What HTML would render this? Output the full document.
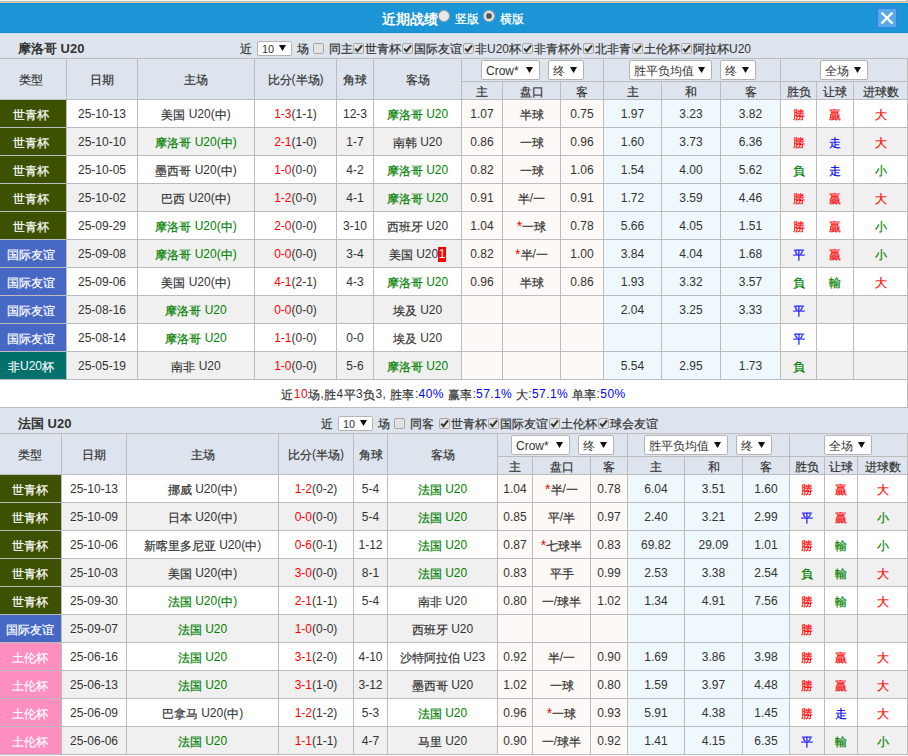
<!DOCTYPE html><html><head><meta charset="utf-8"><style>
*{margin:0;padding:0;box-sizing:border-box}
html,body{width:908px;height:756px;overflow:hidden;background:#fff}
body{position:relative;font-family:"Liberation Sans",sans-serif;font-size:12px;color:#333}
.r{position:absolute}
.t{position:absolute;display:flex;align-items:center;justify-content:center;white-space:nowrap;color:#333;line-height:14px}
.title{position:absolute;font-weight:bold;font-size:13px;color:#333;white-space:nowrap}
.hd{position:absolute;color:#fff;font-weight:bold;font-size:14px;white-space:nowrap}
.hw{position:absolute;color:#fff;font-size:12px;white-space:nowrap;-webkit-text-stroke-width:0.25px}
.radio{position:absolute;width:12px;height:12px;border-radius:50%;background:radial-gradient(circle,#e8e8e8 55%,#d4d4d4 100%);border:1px solid #a8a8a8}
.radio.on i{position:absolute;left:2px;top:2px;width:6px;height:6px;border-radius:50%;background:#5a5a5a}
.close{position:absolute;left:876px;top:7px;width:22px;height:22px;background:#5aa8ea;border:2px solid #2a88e0;display:flex;align-items:center;justify-content:center}
.sel{position:absolute;background:#fff;border:1px solid #b4b4b4;border-radius:2px;color:#333;white-space:nowrap}
.sel .lb{position:absolute;left:4px;top:3px;line-height:14px}
.st{font-size:14px;line-height:10px;position:relative;top:1px}
.sel .ar{position:absolute;right:6px;top:6px}
.flt{position:absolute;height:25px;display:flex;align-items:center;white-space:nowrap;font-size:12px;color:#333}
.fsel{position:relative;display:inline-block;width:35px;height:15px;background:#fff;border:1px solid #b4b4b4;border-radius:2px;margin:0 5px;font-size:11px}
.fsel .lb{position:absolute;left:4px;top:0px;line-height:14px}
.fsel .ar{position:absolute;right:5px;top:3px}
.cbx{display:inline-flex;align-items:center;justify-content:center;width:11px;height:11px;background:#e2e2e2;border:1px solid #a8a8a8;border-radius:2px;margin:0 5px 0 4px}
.cbx.on{margin:0 1px 0 1px}
.bl{color:#00f;font-weight:normal}
.c{position:relative;top:1px;-webkit-text-stroke-width:0.2px}
.rc{display:inline-block;background:#f00;color:#fff;width:8px;height:15px;line-height:15px;text-align:center;vertical-align:0;margin:-3px 0;font-size:12px}
</style></head><body><div class="r" style="left:0px;top:0px;width:908px;height:1px;background:#f4f4f4;"></div><div class="r" style="left:0px;top:1px;width:908px;height:1px;background:#b9b9b9;"></div><div class="r" style="left:0px;top:2px;width:908px;height:1px;background:#ebcf9f;"></div><div class="r" style="left:906px;top:0px;width:1px;height:2px;background:#b9b9b9;"></div><div class="r" style="left:907px;top:0px;width:1px;height:3px;background:#ebcf9f;"></div><div class="r" style="left:0px;top:3px;width:908px;height:30px;background:#1b95d6;"></div><div class="r" style="left:0px;top:3px;width:908px;height:1px;background:#0b8dd8;"></div><div class="r" style="left:0px;top:32px;width:908px;height:1px;background:#0d89d0;"></div><div class="hd" style="left:382px;top:5px;height:29px;line-height:29px">近期战绩</div><div class="radio" style="left:438px;top:10px"></div><div class="hw" style="left:455px;top:4px;height:29px;line-height:30px">竖版</div><div class="radio on" style="left:483px;top:10px"><i></i></div><div class="hw" style="left:500px;top:4px;height:29px;line-height:30px">横版</div><div class="close"><svg width="14" height="14" viewBox="0 0 14 14"><path d="M1.5 1.5 L12.5 12.5 M12.5 1.5 L1.5 12.5" stroke="#fff" stroke-width="2.4"/></svg></div><div class="r" style="left:0px;top:33px;width:908px;height:25px;background:#dde4ed;"></div><div class="title" style="left:18px;top:36px;height:25px;line-height:26px">摩洛哥 U20</div><div class="flt" style="left:240px;top:36px"><span class="c">近</span><span class="fsel"><span class="lb">10</span><svg class="ar" width="7" height="6" viewBox="0 0 7 6"><path d="M0 0 H7 L3.5 6 Z" fill="#111"/></svg></span><span class="c">场</span><span class="cbx"></span><span class="c">同主</span><span class="cbx on" style="margin-left:0px"><svg width="9" height="9" viewBox="0 0 9 9"><path d="M1.2 4.6 L3.5 7.2 L8 1.4" stroke="#333" stroke-width="2" fill="none"/></svg></span><span class="c">世青杯</span><span class="cbx on" style="margin-left:1px"><svg width="9" height="9" viewBox="0 0 9 9"><path d="M1.2 4.6 L3.5 7.2 L8 1.4" stroke="#333" stroke-width="2" fill="none"/></svg></span><span class="c">国际友谊</span><span class="cbx on" style="margin-left:1px"><svg width="9" height="9" viewBox="0 0 9 9"><path d="M1.2 4.6 L3.5 7.2 L8 1.4" stroke="#333" stroke-width="2" fill="none"/></svg></span><span class="c">非</span>U20<span class="c">杯</span><span class="cbx on" style="margin-left:1px"><svg width="9" height="9" viewBox="0 0 9 9"><path d="M1.2 4.6 L3.5 7.2 L8 1.4" stroke="#333" stroke-width="2" fill="none"/></svg></span><span class="c">非青杯外</span><span class="cbx on" style="margin-left:1px"><svg width="9" height="9" viewBox="0 0 9 9"><path d="M1.2 4.6 L3.5 7.2 L8 1.4" stroke="#333" stroke-width="2" fill="none"/></svg></span><span class="c">北非青</span><span class="cbx on" style="margin-left:1px"><svg width="9" height="9" viewBox="0 0 9 9"><path d="M1.2 4.6 L3.5 7.2 L8 1.4" stroke="#333" stroke-width="2" fill="none"/></svg></span><span class="c">土伦杯</span><span class="cbx on" style="margin-left:1px"><svg width="9" height="9" viewBox="0 0 9 9"><path d="M1.2 4.6 L3.5 7.2 L8 1.4" stroke="#333" stroke-width="2" fill="none"/></svg></span><span class="c">阿拉杯</span>U20</div><div class="r" style="left:0px;top:58px;width:908px;height:322px;background:#bcbcbc;"></div><div class="r" style="left:0px;top:59px;width:66px;height:40px;background:#dde4ed;"></div><div class="t" style="left:-2px;top:59px;width:66px;height:40px;color:#333"><span><span class="c">类型</span></span></div><div class="r" style="left:67px;top:59px;width:70px;height:40px;background:#dde4ed;"></div><div class="t" style="left:67px;top:59px;width:70px;height:40px;color:#333"><span><span class="c">日期</span></span></div><div class="r" style="left:138px;top:59px;width:116px;height:40px;background:#dde4ed;"></div><div class="t" style="left:138px;top:59px;width:116px;height:40px;color:#333"><span><span class="c">主场</span></span></div><div class="r" style="left:255px;top:59px;width:81px;height:40px;background:#dde4ed;"></div><div class="t" style="left:255px;top:59px;width:81px;height:40px;color:#333"><span><span class="c">比分</span>(<span class="c">半场</span>)</span></div><div class="r" style="left:337px;top:59px;width:36px;height:40px;background:#dde4ed;"></div><div class="t" style="left:337px;top:59px;width:36px;height:40px;color:#333"><span><span class="c">角球</span></span></div><div class="r" style="left:374px;top:59px;width:87px;height:40px;background:#dde4ed;"></div><div class="t" style="left:374px;top:59px;width:87px;height:40px;color:#333"><span><span class="c">客场</span></span></div><div class="r" style="left:462px;top:59px;width:141px;height:22px;background:#dde4ed;"></div><div class="r" style="left:604px;top:59px;width:176px;height:22px;background:#dde4ed;"></div><div class="r" style="left:781px;top:59px;width:126px;height:22px;background:#dde4ed;"></div><div class="r" style="left:462px;top:82px;width:40px;height:17px;background:#dde4ed;"></div><div class="t" style="left:462px;top:82px;width:40px;height:17px;color:#333"><span><span class="c">主</span></span></div><div class="r" style="left:503px;top:82px;width:57px;height:17px;background:#dde4ed;"></div><div class="t" style="left:503px;top:82px;width:57px;height:17px;color:#333"><span><span class="c">盘口</span></span></div><div class="r" style="left:561px;top:82px;width:42px;height:17px;background:#dde4ed;"></div><div class="t" style="left:561px;top:82px;width:42px;height:17px;color:#333"><span><span class="c">客</span></span></div><div class="r" style="left:604px;top:82px;width:57px;height:17px;background:#dde4ed;"></div><div class="t" style="left:604px;top:82px;width:57px;height:17px;color:#333"><span><span class="c">主</span></span></div><div class="r" style="left:662px;top:82px;width:58px;height:17px;background:#dde4ed;"></div><div class="t" style="left:662px;top:82px;width:58px;height:17px;color:#333"><span><span class="c">和</span></span></div><div class="r" style="left:721px;top:82px;width:59px;height:17px;background:#dde4ed;"></div><div class="t" style="left:721px;top:82px;width:59px;height:17px;color:#333"><span><span class="c">客</span></span></div><div class="r" style="left:781px;top:82px;width:35px;height:17px;background:#dde4ed;"></div><div class="t" style="left:781px;top:82px;width:35px;height:17px;color:#333"><span><span class="c">胜负</span></span></div><div class="r" style="left:817px;top:82px;width:36px;height:17px;background:#dde4ed;"></div><div class="t" style="left:817px;top:82px;width:36px;height:17px;color:#333"><span><span class="c">让球</span></span></div><div class="r" style="left:854px;top:82px;width:53px;height:17px;background:#dde4ed;"></div><div class="t" style="left:854px;top:82px;width:53px;height:17px;color:#333"><span><span class="c">进球数</span></span></div><div class="r" style="left:0px;top:100px;width:66px;height:27px;background:#3d5200;"></div><div class="t" style="left:-2px;top:100px;width:66px;height:27px;color:#fff"><span><span class="c">世青杯</span></span></div><div class="r" style="left:67px;top:100px;width:70px;height:27px;background:#fff;"></div><div class="t" style="left:67px;top:100px;width:70px;height:27px;"><span>25-10-13</span></div><div class="r" style="left:138px;top:100px;width:116px;height:27px;background:#fff;"></div><div class="t" style="left:138px;top:100px;width:116px;height:27px;"><span><span class="c">美国</span> U20(<span class="c">中</span>)</span></div><div class="r" style="left:255px;top:100px;width:81px;height:27px;background:#fff;"></div><div class="t" style="left:255px;top:100px;width:81px;height:27px;"><span><span style="color:#f00">1-3</span>(1-1)</span></div><div class="r" style="left:337px;top:100px;width:36px;height:27px;background:#fff;"></div><div class="t" style="left:337px;top:100px;width:36px;height:27px;"><span>12-3</span></div><div class="r" style="left:374px;top:100px;width:87px;height:27px;background:#fff;"></div><div class="t" style="left:374px;top:100px;width:87px;height:27px;"><span><span style="color:#008000"><span class="c">摩洛哥</span> U20</span></span></div><div class="r" style="left:462px;top:100px;width:40px;height:27px;background:#fdf9f6;"></div><div class="t" style="left:462px;top:100px;width:40px;height:27px;"><span>1.07</span></div><div class="r" style="left:503px;top:100px;width:57px;height:27px;background:#fdf9f6;"></div><div class="t" style="left:503px;top:100px;width:57px;height:27px;"><span><span class="c">半球</span></span></div><div class="r" style="left:561px;top:100px;width:42px;height:27px;background:#fdf9f6;"></div><div class="t" style="left:561px;top:100px;width:42px;height:27px;"><span>0.75</span></div><div class="r" style="left:604px;top:100px;width:57px;height:27px;background:#eff8fc;"></div><div class="t" style="left:604px;top:100px;width:57px;height:27px;"><span>1.97</span></div><div class="r" style="left:662px;top:100px;width:58px;height:27px;background:#eff8fc;"></div><div class="t" style="left:662px;top:100px;width:58px;height:27px;"><span>3.23</span></div><div class="r" style="left:721px;top:100px;width:59px;height:27px;background:#eff8fc;"></div><div class="t" style="left:721px;top:100px;width:59px;height:27px;"><span>3.82</span></div><div class="r" style="left:781px;top:100px;width:35px;height:27px;background:#fff;"></div><div class="t" style="left:781px;top:100px;width:35px;height:27px;"><span><span style="color:#f00"><span class="c">勝</span></span></span></div><div class="r" style="left:817px;top:100px;width:36px;height:27px;background:#fff;"></div><div class="t" style="left:817px;top:100px;width:36px;height:27px;"><span><span style="color:#f00"><span class="c">贏</span></span></span></div><div class="r" style="left:854px;top:100px;width:53px;height:27px;background:#fff;"></div><div class="t" style="left:854px;top:100px;width:53px;height:27px;"><span><span style="color:#f00"><span class="c">大</span></span></span></div><div class="r" style="left:0px;top:128px;width:66px;height:27px;background:#3d5200;"></div><div class="t" style="left:-2px;top:128px;width:66px;height:27px;color:#fff"><span><span class="c">世青杯</span></span></div><div class="r" style="left:67px;top:128px;width:70px;height:27px;background:#f0f0f0;"></div><div class="t" style="left:67px;top:128px;width:70px;height:27px;"><span>25-10-10</span></div><div class="r" style="left:138px;top:128px;width:116px;height:27px;background:#f0f0f0;"></div><div class="t" style="left:138px;top:128px;width:116px;height:27px;"><span><span style="color:#008000"><span class="c">摩洛哥</span> U20(<span class="c">中</span>)</span></span></div><div class="r" style="left:255px;top:128px;width:81px;height:27px;background:#f0f0f0;"></div><div class="t" style="left:255px;top:128px;width:81px;height:27px;"><span><span style="color:#f00">2-1</span>(1-0)</span></div><div class="r" style="left:337px;top:128px;width:36px;height:27px;background:#f0f0f0;"></div><div class="t" style="left:337px;top:128px;width:36px;height:27px;"><span>1-7</span></div><div class="r" style="left:374px;top:128px;width:87px;height:27px;background:#f0f0f0;"></div><div class="t" style="left:374px;top:128px;width:87px;height:27px;"><span><span class="c">南韩</span> U20</span></div><div class="r" style="left:462px;top:128px;width:40px;height:27px;background:#fdf9f6;"></div><div class="t" style="left:462px;top:128px;width:40px;height:27px;"><span>0.86</span></div><div class="r" style="left:503px;top:128px;width:57px;height:27px;background:#fdf9f6;"></div><div class="t" style="left:503px;top:128px;width:57px;height:27px;"><span><span class="c">一球</span></span></div><div class="r" style="left:561px;top:128px;width:42px;height:27px;background:#fdf9f6;"></div><div class="t" style="left:561px;top:128px;width:42px;height:27px;"><span>0.96</span></div><div class="r" style="left:604px;top:128px;width:57px;height:27px;background:#eff8fc;"></div><div class="t" style="left:604px;top:128px;width:57px;height:27px;"><span>1.60</span></div><div class="r" style="left:662px;top:128px;width:58px;height:27px;background:#eff8fc;"></div><div class="t" style="left:662px;top:128px;width:58px;height:27px;"><span>3.73</span></div><div class="r" style="left:721px;top:128px;width:59px;height:27px;background:#eff8fc;"></div><div class="t" style="left:721px;top:128px;width:59px;height:27px;"><span>6.36</span></div><div class="r" style="left:781px;top:128px;width:35px;height:27px;background:#f0f0f0;"></div><div class="t" style="left:781px;top:128px;width:35px;height:27px;"><span><span style="color:#f00"><span class="c">勝</span></span></span></div><div class="r" style="left:817px;top:128px;width:36px;height:27px;background:#f0f0f0;"></div><div class="t" style="left:817px;top:128px;width:36px;height:27px;"><span><span style="color:#00f"><span class="c">走</span></span></span></div><div class="r" style="left:854px;top:128px;width:53px;height:27px;background:#f0f0f0;"></div><div class="t" style="left:854px;top:128px;width:53px;height:27px;"><span><span style="color:#f00"><span class="c">大</span></span></span></div><div class="r" style="left:0px;top:156px;width:66px;height:27px;background:#3d5200;"></div><div class="t" style="left:-2px;top:156px;width:66px;height:27px;color:#fff"><span><span class="c">世青杯</span></span></div><div class="r" style="left:67px;top:156px;width:70px;height:27px;background:#fff;"></div><div class="t" style="left:67px;top:156px;width:70px;height:27px;"><span>25-10-05</span></div><div class="r" style="left:138px;top:156px;width:116px;height:27px;background:#fff;"></div><div class="t" style="left:138px;top:156px;width:116px;height:27px;"><span><span class="c">墨西哥</span> U20(<span class="c">中</span>)</span></div><div class="r" style="left:255px;top:156px;width:81px;height:27px;background:#fff;"></div><div class="t" style="left:255px;top:156px;width:81px;height:27px;"><span><span style="color:#f00">1-0</span>(0-0)</span></div><div class="r" style="left:337px;top:156px;width:36px;height:27px;background:#fff;"></div><div class="t" style="left:337px;top:156px;width:36px;height:27px;"><span>4-2</span></div><div class="r" style="left:374px;top:156px;width:87px;height:27px;background:#fff;"></div><div class="t" style="left:374px;top:156px;width:87px;height:27px;"><span><span style="color:#008000"><span class="c">摩洛哥</span> U20</span></span></div><div class="r" style="left:462px;top:156px;width:40px;height:27px;background:#fdf9f6;"></div><div class="t" style="left:462px;top:156px;width:40px;height:27px;"><span>0.82</span></div><div class="r" style="left:503px;top:156px;width:57px;height:27px;background:#fdf9f6;"></div><div class="t" style="left:503px;top:156px;width:57px;height:27px;"><span><span class="c">一球</span></span></div><div class="r" style="left:561px;top:156px;width:42px;height:27px;background:#fdf9f6;"></div><div class="t" style="left:561px;top:156px;width:42px;height:27px;"><span>1.06</span></div><div class="r" style="left:604px;top:156px;width:57px;height:27px;background:#eff8fc;"></div><div class="t" style="left:604px;top:156px;width:57px;height:27px;"><span>1.54</span></div><div class="r" style="left:662px;top:156px;width:58px;height:27px;background:#eff8fc;"></div><div class="t" style="left:662px;top:156px;width:58px;height:27px;"><span>4.00</span></div><div class="r" style="left:721px;top:156px;width:59px;height:27px;background:#eff8fc;"></div><div class="t" style="left:721px;top:156px;width:59px;height:27px;"><span>5.62</span></div><div class="r" style="left:781px;top:156px;width:35px;height:27px;background:#fff;"></div><div class="t" style="left:781px;top:156px;width:35px;height:27px;"><span><span style="color:#008000"><span class="c">負</span></span></span></div><div class="r" style="left:817px;top:156px;width:36px;height:27px;background:#fff;"></div><div class="t" style="left:817px;top:156px;width:36px;height:27px;"><span><span style="color:#00f"><span class="c">走</span></span></span></div><div class="r" style="left:854px;top:156px;width:53px;height:27px;background:#fff;"></div><div class="t" style="left:854px;top:156px;width:53px;height:27px;"><span><span style="color:#008000"><span class="c">小</span></span></span></div><div class="r" style="left:0px;top:184px;width:66px;height:27px;background:#3d5200;"></div><div class="t" style="left:-2px;top:184px;width:66px;height:27px;color:#fff"><span><span class="c">世青杯</span></span></div><div class="r" style="left:67px;top:184px;width:70px;height:27px;background:#f0f0f0;"></div><div class="t" style="left:67px;top:184px;width:70px;height:27px;"><span>25-10-02</span></div><div class="r" style="left:138px;top:184px;width:116px;height:27px;background:#f0f0f0;"></div><div class="t" style="left:138px;top:184px;width:116px;height:27px;"><span><span class="c">巴西</span> U20(<span class="c">中</span>)</span></div><div class="r" style="left:255px;top:184px;width:81px;height:27px;background:#f0f0f0;"></div><div class="t" style="left:255px;top:184px;width:81px;height:27px;"><span><span style="color:#f00">1-2</span>(0-0)</span></div><div class="r" style="left:337px;top:184px;width:36px;height:27px;background:#f0f0f0;"></div><div class="t" style="left:337px;top:184px;width:36px;height:27px;"><span>4-1</span></div><div class="r" style="left:374px;top:184px;width:87px;height:27px;background:#f0f0f0;"></div><div class="t" style="left:374px;top:184px;width:87px;height:27px;"><span><span style="color:#008000"><span class="c">摩洛哥</span> U20</span></span></div><div class="r" style="left:462px;top:184px;width:40px;height:27px;background:#fdf9f6;"></div><div class="t" style="left:462px;top:184px;width:40px;height:27px;"><span>0.91</span></div><div class="r" style="left:503px;top:184px;width:57px;height:27px;background:#fdf9f6;"></div><div class="t" style="left:503px;top:184px;width:57px;height:27px;"><span><span class="c">半</span>/<span class="c">一</span></span></div><div class="r" style="left:561px;top:184px;width:42px;height:27px;background:#fdf9f6;"></div><div class="t" style="left:561px;top:184px;width:42px;height:27px;"><span>0.91</span></div><div class="r" style="left:604px;top:184px;width:57px;height:27px;background:#eff8fc;"></div><div class="t" style="left:604px;top:184px;width:57px;height:27px;"><span>1.72</span></div><div class="r" style="left:662px;top:184px;width:58px;height:27px;background:#eff8fc;"></div><div class="t" style="left:662px;top:184px;width:58px;height:27px;"><span>3.59</span></div><div class="r" style="left:721px;top:184px;width:59px;height:27px;background:#eff8fc;"></div><div class="t" style="left:721px;top:184px;width:59px;height:27px;"><span>4.46</span></div><div class="r" style="left:781px;top:184px;width:35px;height:27px;background:#f0f0f0;"></div><div class="t" style="left:781px;top:184px;width:35px;height:27px;"><span><span style="color:#f00"><span class="c">勝</span></span></span></div><div class="r" style="left:817px;top:184px;width:36px;height:27px;background:#f0f0f0;"></div><div class="t" style="left:817px;top:184px;width:36px;height:27px;"><span><span style="color:#f00"><span class="c">贏</span></span></span></div><div class="r" style="left:854px;top:184px;width:53px;height:27px;background:#f0f0f0;"></div><div class="t" style="left:854px;top:184px;width:53px;height:27px;"><span><span style="color:#f00"><span class="c">大</span></span></span></div><div class="r" style="left:0px;top:212px;width:66px;height:27px;background:#3d5200;"></div><div class="t" style="left:-2px;top:212px;width:66px;height:27px;color:#fff"><span><span class="c">世青杯</span></span></div><div class="r" style="left:67px;top:212px;width:70px;height:27px;background:#fff;"></div><div class="t" style="left:67px;top:212px;width:70px;height:27px;"><span>25-09-29</span></div><div class="r" style="left:138px;top:212px;width:116px;height:27px;background:#fff;"></div><div class="t" style="left:138px;top:212px;width:116px;height:27px;"><span><span style="color:#008000"><span class="c">摩洛哥</span> U20(<span class="c">中</span>)</span></span></div><div class="r" style="left:255px;top:212px;width:81px;height:27px;background:#fff;"></div><div class="t" style="left:255px;top:212px;width:81px;height:27px;"><span><span style="color:#f00">2-0</span>(0-0)</span></div><div class="r" style="left:337px;top:212px;width:36px;height:27px;background:#fff;"></div><div class="t" style="left:337px;top:212px;width:36px;height:27px;"><span>3-10</span></div><div class="r" style="left:374px;top:212px;width:87px;height:27px;background:#fff;"></div><div class="t" style="left:374px;top:212px;width:87px;height:27px;"><span><span class="c">西班牙</span> U20</span></div><div class="r" style="left:462px;top:212px;width:40px;height:27px;background:#fdf9f6;"></div><div class="t" style="left:462px;top:212px;width:40px;height:27px;"><span>1.04</span></div><div class="r" style="left:503px;top:212px;width:57px;height:27px;background:#fdf9f6;"></div><div class="t" style="left:503px;top:212px;width:57px;height:27px;"><span><span class="st" style="color:#f00">*</span><span class="c">一球</span></span></div><div class="r" style="left:561px;top:212px;width:42px;height:27px;background:#fdf9f6;"></div><div class="t" style="left:561px;top:212px;width:42px;height:27px;"><span>0.78</span></div><div class="r" style="left:604px;top:212px;width:57px;height:27px;background:#eff8fc;"></div><div class="t" style="left:604px;top:212px;width:57px;height:27px;"><span>5.66</span></div><div class="r" style="left:662px;top:212px;width:58px;height:27px;background:#eff8fc;"></div><div class="t" style="left:662px;top:212px;width:58px;height:27px;"><span>4.05</span></div><div class="r" style="left:721px;top:212px;width:59px;height:27px;background:#eff8fc;"></div><div class="t" style="left:721px;top:212px;width:59px;height:27px;"><span>1.51</span></div><div class="r" style="left:781px;top:212px;width:35px;height:27px;background:#fff;"></div><div class="t" style="left:781px;top:212px;width:35px;height:27px;"><span><span style="color:#f00"><span class="c">勝</span></span></span></div><div class="r" style="left:817px;top:212px;width:36px;height:27px;background:#fff;"></div><div class="t" style="left:817px;top:212px;width:36px;height:27px;"><span><span style="color:#f00"><span class="c">贏</span></span></span></div><div class="r" style="left:854px;top:212px;width:53px;height:27px;background:#fff;"></div><div class="t" style="left:854px;top:212px;width:53px;height:27px;"><span><span style="color:#008000"><span class="c">小</span></span></span></div><div class="r" style="left:0px;top:240px;width:66px;height:27px;background:#4668c4;"></div><div class="t" style="left:-2px;top:240px;width:66px;height:27px;color:#fff"><span><span class="c">国际友谊</span></span></div><div class="r" style="left:67px;top:240px;width:70px;height:27px;background:#f0f0f0;"></div><div class="t" style="left:67px;top:240px;width:70px;height:27px;"><span>25-09-08</span></div><div class="r" style="left:138px;top:240px;width:116px;height:27px;background:#f0f0f0;"></div><div class="t" style="left:138px;top:240px;width:116px;height:27px;"><span><span style="color:#008000"><span class="c">摩洛哥</span> U20(<span class="c">中</span>)</span></span></div><div class="r" style="left:255px;top:240px;width:81px;height:27px;background:#f0f0f0;"></div><div class="t" style="left:255px;top:240px;width:81px;height:27px;"><span><span style="color:#f00">0-0</span>(0-0)</span></div><div class="r" style="left:337px;top:240px;width:36px;height:27px;background:#f0f0f0;"></div><div class="t" style="left:337px;top:240px;width:36px;height:27px;"><span>3-4</span></div><div class="r" style="left:374px;top:240px;width:87px;height:27px;background:#f0f0f0;"></div><div class="t" style="left:374px;top:240px;width:87px;height:27px;"><span><span class="c">美国</span> U20<span class="rc">1</span></span></div><div class="r" style="left:462px;top:240px;width:40px;height:27px;background:#fdf9f6;"></div><div class="t" style="left:462px;top:240px;width:40px;height:27px;"><span>0.82</span></div><div class="r" style="left:503px;top:240px;width:57px;height:27px;background:#fdf9f6;"></div><div class="t" style="left:503px;top:240px;width:57px;height:27px;"><span><span class="st" style="color:#f00">*</span><span class="c">半</span>/<span class="c">一</span></span></div><div class="r" style="left:561px;top:240px;width:42px;height:27px;background:#fdf9f6;"></div><div class="t" style="left:561px;top:240px;width:42px;height:27px;"><span>1.00</span></div><div class="r" style="left:604px;top:240px;width:57px;height:27px;background:#eff8fc;"></div><div class="t" style="left:604px;top:240px;width:57px;height:27px;"><span>3.84</span></div><div class="r" style="left:662px;top:240px;width:58px;height:27px;background:#eff8fc;"></div><div class="t" style="left:662px;top:240px;width:58px;height:27px;"><span>4.04</span></div><div class="r" style="left:721px;top:240px;width:59px;height:27px;background:#eff8fc;"></div><div class="t" style="left:721px;top:240px;width:59px;height:27px;"><span>1.68</span></div><div class="r" style="left:781px;top:240px;width:35px;height:27px;background:#f0f0f0;"></div><div class="t" style="left:781px;top:240px;width:35px;height:27px;"><span><span style="color:#00f"><span class="c">平</span></span></span></div><div class="r" style="left:817px;top:240px;width:36px;height:27px;background:#f0f0f0;"></div><div class="t" style="left:817px;top:240px;width:36px;height:27px;"><span><span style="color:#f00"><span class="c">贏</span></span></span></div><div class="r" style="left:854px;top:240px;width:53px;height:27px;background:#f0f0f0;"></div><div class="t" style="left:854px;top:240px;width:53px;height:27px;"><span><span style="color:#008000"><span class="c">小</span></span></span></div><div class="r" style="left:0px;top:268px;width:66px;height:27px;background:#4668c4;"></div><div class="t" style="left:-2px;top:268px;width:66px;height:27px;color:#fff"><span><span class="c">国际友谊</span></span></div><div class="r" style="left:67px;top:268px;width:70px;height:27px;background:#fff;"></div><div class="t" style="left:67px;top:268px;width:70px;height:27px;"><span>25-09-06</span></div><div class="r" style="left:138px;top:268px;width:116px;height:27px;background:#fff;"></div><div class="t" style="left:138px;top:268px;width:116px;height:27px;"><span><span class="c">美国</span> U20(<span class="c">中</span>)</span></div><div class="r" style="left:255px;top:268px;width:81px;height:27px;background:#fff;"></div><div class="t" style="left:255px;top:268px;width:81px;height:27px;"><span><span style="color:#f00">4-1</span>(2-1)</span></div><div class="r" style="left:337px;top:268px;width:36px;height:27px;background:#fff;"></div><div class="t" style="left:337px;top:268px;width:36px;height:27px;"><span>4-3</span></div><div class="r" style="left:374px;top:268px;width:87px;height:27px;background:#fff;"></div><div class="t" style="left:374px;top:268px;width:87px;height:27px;"><span><span style="color:#008000"><span class="c">摩洛哥</span> U20</span></span></div><div class="r" style="left:462px;top:268px;width:40px;height:27px;background:#fdf9f6;"></div><div class="t" style="left:462px;top:268px;width:40px;height:27px;"><span>0.96</span></div><div class="r" style="left:503px;top:268px;width:57px;height:27px;background:#fdf9f6;"></div><div class="t" style="left:503px;top:268px;width:57px;height:27px;"><span><span class="c">半球</span></span></div><div class="r" style="left:561px;top:268px;width:42px;height:27px;background:#fdf9f6;"></div><div class="t" style="left:561px;top:268px;width:42px;height:27px;"><span>0.86</span></div><div class="r" style="left:604px;top:268px;width:57px;height:27px;background:#eff8fc;"></div><div class="t" style="left:604px;top:268px;width:57px;height:27px;"><span>1.93</span></div><div class="r" style="left:662px;top:268px;width:58px;height:27px;background:#eff8fc;"></div><div class="t" style="left:662px;top:268px;width:58px;height:27px;"><span>3.32</span></div><div class="r" style="left:721px;top:268px;width:59px;height:27px;background:#eff8fc;"></div><div class="t" style="left:721px;top:268px;width:59px;height:27px;"><span>3.57</span></div><div class="r" style="left:781px;top:268px;width:35px;height:27px;background:#fff;"></div><div class="t" style="left:781px;top:268px;width:35px;height:27px;"><span><span style="color:#008000"><span class="c">負</span></span></span></div><div class="r" style="left:817px;top:268px;width:36px;height:27px;background:#fff;"></div><div class="t" style="left:817px;top:268px;width:36px;height:27px;"><span><span style="color:#008000"><span class="c">輸</span></span></span></div><div class="r" style="left:854px;top:268px;width:53px;height:27px;background:#fff;"></div><div class="t" style="left:854px;top:268px;width:53px;height:27px;"><span><span style="color:#f00"><span class="c">大</span></span></span></div><div class="r" style="left:0px;top:296px;width:66px;height:27px;background:#4668c4;"></div><div class="t" style="left:-2px;top:296px;width:66px;height:27px;color:#fff"><span><span class="c">国际友谊</span></span></div><div class="r" style="left:67px;top:296px;width:70px;height:27px;background:#f0f0f0;"></div><div class="t" style="left:67px;top:296px;width:70px;height:27px;"><span>25-08-16</span></div><div class="r" style="left:138px;top:296px;width:116px;height:27px;background:#f0f0f0;"></div><div class="t" style="left:138px;top:296px;width:116px;height:27px;"><span><span style="color:#008000"><span class="c">摩洛哥</span> U20</span></span></div><div class="r" style="left:255px;top:296px;width:81px;height:27px;background:#f0f0f0;"></div><div class="t" style="left:255px;top:296px;width:81px;height:27px;"><span><span style="color:#f00">0-0</span>(0-0)</span></div><div class="r" style="left:337px;top:296px;width:36px;height:27px;background:#f0f0f0;"></div><div class="t" style="left:337px;top:296px;width:36px;height:27px;"><span></span></div><div class="r" style="left:374px;top:296px;width:87px;height:27px;background:#f0f0f0;"></div><div class="t" style="left:374px;top:296px;width:87px;height:27px;"><span><span class="c">埃及</span> U20</span></div><div class="r" style="left:462px;top:296px;width:40px;height:27px;background:#fdf9f6;"></div><div class="t" style="left:462px;top:296px;width:40px;height:27px;"><span></span></div><div class="r" style="left:503px;top:296px;width:57px;height:27px;background:#fdf9f6;"></div><div class="t" style="left:503px;top:296px;width:57px;height:27px;"><span></span></div><div class="r" style="left:561px;top:296px;width:42px;height:27px;background:#fdf9f6;"></div><div class="t" style="left:561px;top:296px;width:42px;height:27px;"><span></span></div><div class="r" style="left:604px;top:296px;width:57px;height:27px;background:#eff8fc;"></div><div class="t" style="left:604px;top:296px;width:57px;height:27px;"><span>2.04</span></div><div class="r" style="left:662px;top:296px;width:58px;height:27px;background:#eff8fc;"></div><div class="t" style="left:662px;top:296px;width:58px;height:27px;"><span>3.25</span></div><div class="r" style="left:721px;top:296px;width:59px;height:27px;background:#eff8fc;"></div><div class="t" style="left:721px;top:296px;width:59px;height:27px;"><span>3.33</span></div><div class="r" style="left:781px;top:296px;width:35px;height:27px;background:#f0f0f0;"></div><div class="t" style="left:781px;top:296px;width:35px;height:27px;"><span><span style="color:#00f"><span class="c">平</span></span></span></div><div class="r" style="left:817px;top:296px;width:36px;height:27px;background:#f0f0f0;"></div><div class="t" style="left:817px;top:296px;width:36px;height:27px;"><span></span></div><div class="r" style="left:854px;top:296px;width:53px;height:27px;background:#f0f0f0;"></div><div class="t" style="left:854px;top:296px;width:53px;height:27px;"><span></span></div><div class="r" style="left:0px;top:324px;width:66px;height:27px;background:#4668c4;"></div><div class="t" style="left:-2px;top:324px;width:66px;height:27px;color:#fff"><span><span class="c">国际友谊</span></span></div><div class="r" style="left:67px;top:324px;width:70px;height:27px;background:#fff;"></div><div class="t" style="left:67px;top:324px;width:70px;height:27px;"><span>25-08-14</span></div><div class="r" style="left:138px;top:324px;width:116px;height:27px;background:#fff;"></div><div class="t" style="left:138px;top:324px;width:116px;height:27px;"><span><span style="color:#008000"><span class="c">摩洛哥</span> U20</span></span></div><div class="r" style="left:255px;top:324px;width:81px;height:27px;background:#fff;"></div><div class="t" style="left:255px;top:324px;width:81px;height:27px;"><span><span style="color:#f00">1-1</span>(0-0)</span></div><div class="r" style="left:337px;top:324px;width:36px;height:27px;background:#fff;"></div><div class="t" style="left:337px;top:324px;width:36px;height:27px;"><span>0-0</span></div><div class="r" style="left:374px;top:324px;width:87px;height:27px;background:#fff;"></div><div class="t" style="left:374px;top:324px;width:87px;height:27px;"><span><span class="c">埃及</span> U20</span></div><div class="r" style="left:462px;top:324px;width:40px;height:27px;background:#fdf9f6;"></div><div class="t" style="left:462px;top:324px;width:40px;height:27px;"><span></span></div><div class="r" style="left:503px;top:324px;width:57px;height:27px;background:#fdf9f6;"></div><div class="t" style="left:503px;top:324px;width:57px;height:27px;"><span></span></div><div class="r" style="left:561px;top:324px;width:42px;height:27px;background:#fdf9f6;"></div><div class="t" style="left:561px;top:324px;width:42px;height:27px;"><span></span></div><div class="r" style="left:604px;top:324px;width:57px;height:27px;background:#eff8fc;"></div><div class="t" style="left:604px;top:324px;width:57px;height:27px;"><span></span></div><div class="r" style="left:662px;top:324px;width:58px;height:27px;background:#eff8fc;"></div><div class="t" style="left:662px;top:324px;width:58px;height:27px;"><span></span></div><div class="r" style="left:721px;top:324px;width:59px;height:27px;background:#eff8fc;"></div><div class="t" style="left:721px;top:324px;width:59px;height:27px;"><span></span></div><div class="r" style="left:781px;top:324px;width:35px;height:27px;background:#fff;"></div><div class="t" style="left:781px;top:324px;width:35px;height:27px;"><span><span style="color:#00f"><span class="c">平</span></span></span></div><div class="r" style="left:817px;top:324px;width:36px;height:27px;background:#fff;"></div><div class="t" style="left:817px;top:324px;width:36px;height:27px;"><span></span></div><div class="r" style="left:854px;top:324px;width:53px;height:27px;background:#fff;"></div><div class="t" style="left:854px;top:324px;width:53px;height:27px;"><span></span></div><div class="r" style="left:0px;top:352px;width:66px;height:27px;background:#00706b;"></div><div class="t" style="left:-2px;top:352px;width:66px;height:27px;color:#fff"><span><span class="c">非</span>U20<span class="c">杯</span></span></div><div class="r" style="left:67px;top:352px;width:70px;height:27px;background:#f0f0f0;"></div><div class="t" style="left:67px;top:352px;width:70px;height:27px;"><span>25-05-19</span></div><div class="r" style="left:138px;top:352px;width:116px;height:27px;background:#f0f0f0;"></div><div class="t" style="left:138px;top:352px;width:116px;height:27px;"><span><span class="c">南非</span> U20</span></div><div class="r" style="left:255px;top:352px;width:81px;height:27px;background:#f0f0f0;"></div><div class="t" style="left:255px;top:352px;width:81px;height:27px;"><span><span style="color:#f00">1-0</span>(0-0)</span></div><div class="r" style="left:337px;top:352px;width:36px;height:27px;background:#f0f0f0;"></div><div class="t" style="left:337px;top:352px;width:36px;height:27px;"><span>5-6</span></div><div class="r" style="left:374px;top:352px;width:87px;height:27px;background:#f0f0f0;"></div><div class="t" style="left:374px;top:352px;width:87px;height:27px;"><span><span style="color:#008000"><span class="c">摩洛哥</span> U20</span></span></div><div class="r" style="left:462px;top:352px;width:40px;height:27px;background:#fdf9f6;"></div><div class="t" style="left:462px;top:352px;width:40px;height:27px;"><span></span></div><div class="r" style="left:503px;top:352px;width:57px;height:27px;background:#fdf9f6;"></div><div class="t" style="left:503px;top:352px;width:57px;height:27px;"><span></span></div><div class="r" style="left:561px;top:352px;width:42px;height:27px;background:#fdf9f6;"></div><div class="t" style="left:561px;top:352px;width:42px;height:27px;"><span></span></div><div class="r" style="left:604px;top:352px;width:57px;height:27px;background:#eff8fc;"></div><div class="t" style="left:604px;top:352px;width:57px;height:27px;"><span>5.54</span></div><div class="r" style="left:662px;top:352px;width:58px;height:27px;background:#eff8fc;"></div><div class="t" style="left:662px;top:352px;width:58px;height:27px;"><span>2.95</span></div><div class="r" style="left:721px;top:352px;width:59px;height:27px;background:#eff8fc;"></div><div class="t" style="left:721px;top:352px;width:59px;height:27px;"><span>1.73</span></div><div class="r" style="left:781px;top:352px;width:35px;height:27px;background:#f0f0f0;"></div><div class="t" style="left:781px;top:352px;width:35px;height:27px;"><span><span style="color:#008000"><span class="c">負</span></span></span></div><div class="r" style="left:817px;top:352px;width:36px;height:27px;background:#f0f0f0;"></div><div class="t" style="left:817px;top:352px;width:36px;height:27px;"><span></span></div><div class="r" style="left:854px;top:352px;width:53px;height:27px;background:#f0f0f0;"></div><div class="t" style="left:854px;top:352px;width:53px;height:27px;"><span></span></div><div class="sel" style="left:481px;top:60px;width:59px;height:20px;"><span class="lb">Crow*</span><svg class="ar" width="7" height="6" viewBox="0 0 7 6"><path d="M0 0 H7 L3.5 6 Z" fill="#111"/></svg></div><div class="sel" style="left:548px;top:60px;width:36px;height:20px;"><span class="lb">终</span><svg class="ar" width="7" height="6" viewBox="0 0 7 6"><path d="M0 0 H7 L3.5 6 Z" fill="#111"/></svg></div><div class="sel" style="left:629px;top:60px;width:83px;height:20px;"><span class="lb">胜平负均值</span><svg class="ar" width="7" height="6" viewBox="0 0 7 6"><path d="M0 0 H7 L3.5 6 Z" fill="#111"/></svg></div><div class="sel" style="left:720px;top:60px;width:36px;height:20px;"><span class="lb">终</span><svg class="ar" width="7" height="6" viewBox="0 0 7 6"><path d="M0 0 H7 L3.5 6 Z" fill="#111"/></svg></div><div class="sel" style="left:820px;top:60px;width:48px;height:20px;"><span class="lb">全场</span><svg class="ar" width="7" height="6" viewBox="0 0 7 6"><path d="M0 0 H7 L3.5 6 Z" fill="#111"/></svg></div><div class="r" style="left:0px;top:380px;width:907px;height:27px;background:#fff;"></div><div class="r" style="left:907px;top:379px;width:1px;height:29px;background:#bcbcbc;"></div><div class="t" style="left:0px;top:380px;width:907px;height:27px;"><span><span style="letter-spacing:0.4px"><span class="c">近</span><span style="color:#f00">10</span><span class="c">场</span>,<span class="c">胜</span>4<span class="c">平</span>3<span class="c">负</span>3, <span class="c">胜率</span>:<b class="bl">40%</b> <span class="c">赢率</span>:<b class="bl">57.1%</b> <span class="c">大</span>:<b class="bl">57.1%</b> <span class="c">单率</span>:<b class="bl">50%</b></span></span></div><div class="r" style="left:0px;top:407px;width:908px;height:1px;background:#bcbcbc;"></div><div class="r" style="left:0px;top:408px;width:908px;height:25px;background:#dde4ed;"></div><div class="title" style="left:18px;top:411px;height:25px;line-height:26px">法国 U20</div><div class="flt" style="left:321px;top:411px"><span class="c">近</span><span class="fsel"><span class="lb">10</span><svg class="ar" width="7" height="6" viewBox="0 0 7 6"><path d="M0 0 H7 L3.5 6 Z" fill="#111"/></svg></span><span class="c">场</span><span class="cbx"></span><span class="c">同客</span><span class="cbx on" style="margin-left:5px"><svg width="9" height="9" viewBox="0 0 9 9"><path d="M1.2 4.6 L3.5 7.2 L8 1.4" stroke="#333" stroke-width="2" fill="none"/></svg></span><span class="c">世青杯</span><span class="cbx on" style="margin-left:1px"><svg width="9" height="9" viewBox="0 0 9 9"><path d="M1.2 4.6 L3.5 7.2 L8 1.4" stroke="#333" stroke-width="2" fill="none"/></svg></span><span class="c">国际友谊</span><span class="cbx on" style="margin-left:1px"><svg width="9" height="9" viewBox="0 0 9 9"><path d="M1.2 4.6 L3.5 7.2 L8 1.4" stroke="#333" stroke-width="2" fill="none"/></svg></span><span class="c">土伦杯</span><span class="cbx on" style="margin-left:1px"><svg width="9" height="9" viewBox="0 0 9 9"><path d="M1.2 4.6 L3.5 7.2 L8 1.4" stroke="#333" stroke-width="2" fill="none"/></svg></span><span class="c">球会友谊</span></div><div class="r" style="left:0px;top:433px;width:908px;height:322px;background:#bcbcbc;"></div><div class="r" style="left:0px;top:434px;width:61px;height:40px;background:#dde4ed;"></div><div class="t" style="left:-1px;top:434px;width:61px;height:40px;color:#333"><span><span class="c">类型</span></span></div><div class="r" style="left:62px;top:434px;width:64px;height:40px;background:#dde4ed;"></div><div class="t" style="left:62px;top:434px;width:64px;height:40px;color:#333"><span><span class="c">日期</span></span></div><div class="r" style="left:127px;top:434px;width:151px;height:40px;background:#dde4ed;"></div><div class="t" style="left:127px;top:434px;width:151px;height:40px;color:#333"><span><span class="c">主场</span></span></div><div class="r" style="left:279px;top:434px;width:74px;height:40px;background:#dde4ed;"></div><div class="t" style="left:279px;top:434px;width:74px;height:40px;color:#333"><span><span class="c">比分</span>(<span class="c">半场</span>)</span></div><div class="r" style="left:354px;top:434px;width:33px;height:40px;background:#dde4ed;"></div><div class="t" style="left:354px;top:434px;width:33px;height:40px;color:#333"><span><span class="c">角球</span></span></div><div class="r" style="left:388px;top:434px;width:109px;height:40px;background:#dde4ed;"></div><div class="t" style="left:388px;top:434px;width:109px;height:40px;color:#333"><span><span class="c">客场</span></span></div><div class="r" style="left:498px;top:434px;width:129px;height:22px;background:#dde4ed;"></div><div class="r" style="left:628px;top:434px;width:161px;height:22px;background:#dde4ed;"></div><div class="r" style="left:790px;top:434px;width:117px;height:22px;background:#dde4ed;"></div><div class="r" style="left:498px;top:457px;width:34px;height:17px;background:#dde4ed;"></div><div class="t" style="left:498px;top:457px;width:34px;height:17px;color:#333"><span><span class="c">主</span></span></div><div class="r" style="left:533px;top:457px;width:57px;height:17px;background:#dde4ed;"></div><div class="t" style="left:533px;top:457px;width:57px;height:17px;color:#333"><span><span class="c">盘口</span></span></div><div class="r" style="left:591px;top:457px;width:36px;height:17px;background:#dde4ed;"></div><div class="t" style="left:591px;top:457px;width:36px;height:17px;color:#333"><span><span class="c">客</span></span></div><div class="r" style="left:628px;top:457px;width:56px;height:17px;background:#dde4ed;"></div><div class="t" style="left:628px;top:457px;width:56px;height:17px;color:#333"><span><span class="c">主</span></span></div><div class="r" style="left:685px;top:457px;width:57px;height:17px;background:#dde4ed;"></div><div class="t" style="left:685px;top:457px;width:57px;height:17px;color:#333"><span><span class="c">和</span></span></div><div class="r" style="left:743px;top:457px;width:46px;height:17px;background:#dde4ed;"></div><div class="t" style="left:743px;top:457px;width:46px;height:17px;color:#333"><span><span class="c">客</span></span></div><div class="r" style="left:790px;top:457px;width:34px;height:17px;background:#dde4ed;"></div><div class="t" style="left:790px;top:457px;width:34px;height:17px;color:#333"><span><span class="c">胜负</span></span></div><div class="r" style="left:825px;top:457px;width:32px;height:17px;background:#dde4ed;"></div><div class="t" style="left:825px;top:457px;width:32px;height:17px;color:#333"><span><span class="c">让球</span></span></div><div class="r" style="left:858px;top:457px;width:49px;height:17px;background:#dde4ed;"></div><div class="t" style="left:858px;top:457px;width:49px;height:17px;color:#333"><span><span class="c">进球数</span></span></div><div class="r" style="left:0px;top:475px;width:61px;height:27px;background:#3d5200;"></div><div class="t" style="left:-1px;top:475px;width:61px;height:27px;color:#fff"><span><span class="c">世青杯</span></span></div><div class="r" style="left:62px;top:475px;width:64px;height:27px;background:#fff;"></div><div class="t" style="left:62px;top:475px;width:64px;height:27px;"><span>25-10-13</span></div><div class="r" style="left:127px;top:475px;width:151px;height:27px;background:#fff;"></div><div class="t" style="left:127px;top:475px;width:151px;height:27px;"><span><span class="c">挪威</span> U20(<span class="c">中</span>)</span></div><div class="r" style="left:279px;top:475px;width:74px;height:27px;background:#fff;"></div><div class="t" style="left:279px;top:475px;width:74px;height:27px;"><span><span style="color:#f00">1-2</span>(0-2)</span></div><div class="r" style="left:354px;top:475px;width:33px;height:27px;background:#fff;"></div><div class="t" style="left:354px;top:475px;width:33px;height:27px;"><span>5-4</span></div><div class="r" style="left:388px;top:475px;width:109px;height:27px;background:#fff;"></div><div class="t" style="left:388px;top:475px;width:109px;height:27px;"><span><span style="color:#008000"><span class="c">法国</span> U20</span></span></div><div class="r" style="left:498px;top:475px;width:34px;height:27px;background:#fdf9f6;"></div><div class="t" style="left:498px;top:475px;width:34px;height:27px;"><span>1.04</span></div><div class="r" style="left:533px;top:475px;width:57px;height:27px;background:#fdf9f6;"></div><div class="t" style="left:533px;top:475px;width:57px;height:27px;"><span><span class="st" style="color:#f00">*</span><span class="c">半</span>/<span class="c">一</span></span></div><div class="r" style="left:591px;top:475px;width:36px;height:27px;background:#fdf9f6;"></div><div class="t" style="left:591px;top:475px;width:36px;height:27px;"><span>0.78</span></div><div class="r" style="left:628px;top:475px;width:56px;height:27px;background:#eff8fc;"></div><div class="t" style="left:628px;top:475px;width:56px;height:27px;"><span>6.04</span></div><div class="r" style="left:685px;top:475px;width:57px;height:27px;background:#eff8fc;"></div><div class="t" style="left:685px;top:475px;width:57px;height:27px;"><span>3.51</span></div><div class="r" style="left:743px;top:475px;width:46px;height:27px;background:#eff8fc;"></div><div class="t" style="left:743px;top:475px;width:46px;height:27px;"><span>1.60</span></div><div class="r" style="left:790px;top:475px;width:34px;height:27px;background:#fff;"></div><div class="t" style="left:790px;top:475px;width:34px;height:27px;"><span><span style="color:#f00"><span class="c">勝</span></span></span></div><div class="r" style="left:825px;top:475px;width:32px;height:27px;background:#fff;"></div><div class="t" style="left:825px;top:475px;width:32px;height:27px;"><span><span style="color:#f00"><span class="c">贏</span></span></span></div><div class="r" style="left:858px;top:475px;width:49px;height:27px;background:#fff;"></div><div class="t" style="left:858px;top:475px;width:49px;height:27px;"><span><span style="color:#f00"><span class="c">大</span></span></span></div><div class="r" style="left:0px;top:503px;width:61px;height:27px;background:#3d5200;"></div><div class="t" style="left:-1px;top:503px;width:61px;height:27px;color:#fff"><span><span class="c">世青杯</span></span></div><div class="r" style="left:62px;top:503px;width:64px;height:27px;background:#f0f0f0;"></div><div class="t" style="left:62px;top:503px;width:64px;height:27px;"><span>25-10-09</span></div><div class="r" style="left:127px;top:503px;width:151px;height:27px;background:#f0f0f0;"></div><div class="t" style="left:127px;top:503px;width:151px;height:27px;"><span><span class="c">日本</span> U20(<span class="c">中</span>)</span></div><div class="r" style="left:279px;top:503px;width:74px;height:27px;background:#f0f0f0;"></div><div class="t" style="left:279px;top:503px;width:74px;height:27px;"><span><span style="color:#f00">0-0</span>(0-0)</span></div><div class="r" style="left:354px;top:503px;width:33px;height:27px;background:#f0f0f0;"></div><div class="t" style="left:354px;top:503px;width:33px;height:27px;"><span>5-4</span></div><div class="r" style="left:388px;top:503px;width:109px;height:27px;background:#f0f0f0;"></div><div class="t" style="left:388px;top:503px;width:109px;height:27px;"><span><span style="color:#008000"><span class="c">法国</span> U20</span></span></div><div class="r" style="left:498px;top:503px;width:34px;height:27px;background:#fdf9f6;"></div><div class="t" style="left:498px;top:503px;width:34px;height:27px;"><span>0.85</span></div><div class="r" style="left:533px;top:503px;width:57px;height:27px;background:#fdf9f6;"></div><div class="t" style="left:533px;top:503px;width:57px;height:27px;"><span><span class="c">平</span>/<span class="c">半</span></span></div><div class="r" style="left:591px;top:503px;width:36px;height:27px;background:#fdf9f6;"></div><div class="t" style="left:591px;top:503px;width:36px;height:27px;"><span>0.97</span></div><div class="r" style="left:628px;top:503px;width:56px;height:27px;background:#eff8fc;"></div><div class="t" style="left:628px;top:503px;width:56px;height:27px;"><span>2.40</span></div><div class="r" style="left:685px;top:503px;width:57px;height:27px;background:#eff8fc;"></div><div class="t" style="left:685px;top:503px;width:57px;height:27px;"><span>3.21</span></div><div class="r" style="left:743px;top:503px;width:46px;height:27px;background:#eff8fc;"></div><div class="t" style="left:743px;top:503px;width:46px;height:27px;"><span>2.99</span></div><div class="r" style="left:790px;top:503px;width:34px;height:27px;background:#f0f0f0;"></div><div class="t" style="left:790px;top:503px;width:34px;height:27px;"><span><span style="color:#00f"><span class="c">平</span></span></span></div><div class="r" style="left:825px;top:503px;width:32px;height:27px;background:#f0f0f0;"></div><div class="t" style="left:825px;top:503px;width:32px;height:27px;"><span><span style="color:#f00"><span class="c">贏</span></span></span></div><div class="r" style="left:858px;top:503px;width:49px;height:27px;background:#f0f0f0;"></div><div class="t" style="left:858px;top:503px;width:49px;height:27px;"><span><span style="color:#008000"><span class="c">小</span></span></span></div><div class="r" style="left:0px;top:531px;width:61px;height:27px;background:#3d5200;"></div><div class="t" style="left:-1px;top:531px;width:61px;height:27px;color:#fff"><span><span class="c">世青杯</span></span></div><div class="r" style="left:62px;top:531px;width:64px;height:27px;background:#fff;"></div><div class="t" style="left:62px;top:531px;width:64px;height:27px;"><span>25-10-06</span></div><div class="r" style="left:127px;top:531px;width:151px;height:27px;background:#fff;"></div><div class="t" style="left:127px;top:531px;width:151px;height:27px;"><span><span class="c">新喀里多尼亚</span> U20(<span class="c">中</span>)</span></div><div class="r" style="left:279px;top:531px;width:74px;height:27px;background:#fff;"></div><div class="t" style="left:279px;top:531px;width:74px;height:27px;"><span><span style="color:#f00">0-6</span>(0-1)</span></div><div class="r" style="left:354px;top:531px;width:33px;height:27px;background:#fff;"></div><div class="t" style="left:354px;top:531px;width:33px;height:27px;"><span>1-12</span></div><div class="r" style="left:388px;top:531px;width:109px;height:27px;background:#fff;"></div><div class="t" style="left:388px;top:531px;width:109px;height:27px;"><span><span style="color:#008000"><span class="c">法国</span> U20</span></span></div><div class="r" style="left:498px;top:531px;width:34px;height:27px;background:#fdf9f6;"></div><div class="t" style="left:498px;top:531px;width:34px;height:27px;"><span>0.87</span></div><div class="r" style="left:533px;top:531px;width:57px;height:27px;background:#fdf9f6;"></div><div class="t" style="left:533px;top:531px;width:57px;height:27px;"><span><span class="st" style="color:#f00">*</span><span class="c">七球半</span></span></div><div class="r" style="left:591px;top:531px;width:36px;height:27px;background:#fdf9f6;"></div><div class="t" style="left:591px;top:531px;width:36px;height:27px;"><span>0.83</span></div><div class="r" style="left:628px;top:531px;width:56px;height:27px;background:#eff8fc;"></div><div class="t" style="left:628px;top:531px;width:56px;height:27px;"><span>69.82</span></div><div class="r" style="left:685px;top:531px;width:57px;height:27px;background:#eff8fc;"></div><div class="t" style="left:685px;top:531px;width:57px;height:27px;"><span>29.09</span></div><div class="r" style="left:743px;top:531px;width:46px;height:27px;background:#eff8fc;"></div><div class="t" style="left:743px;top:531px;width:46px;height:27px;"><span>1.01</span></div><div class="r" style="left:790px;top:531px;width:34px;height:27px;background:#fff;"></div><div class="t" style="left:790px;top:531px;width:34px;height:27px;"><span><span style="color:#f00"><span class="c">勝</span></span></span></div><div class="r" style="left:825px;top:531px;width:32px;height:27px;background:#fff;"></div><div class="t" style="left:825px;top:531px;width:32px;height:27px;"><span><span style="color:#008000"><span class="c">輸</span></span></span></div><div class="r" style="left:858px;top:531px;width:49px;height:27px;background:#fff;"></div><div class="t" style="left:858px;top:531px;width:49px;height:27px;"><span><span style="color:#008000"><span class="c">小</span></span></span></div><div class="r" style="left:0px;top:559px;width:61px;height:27px;background:#3d5200;"></div><div class="t" style="left:-1px;top:559px;width:61px;height:27px;color:#fff"><span><span class="c">世青杯</span></span></div><div class="r" style="left:62px;top:559px;width:64px;height:27px;background:#f0f0f0;"></div><div class="t" style="left:62px;top:559px;width:64px;height:27px;"><span>25-10-03</span></div><div class="r" style="left:127px;top:559px;width:151px;height:27px;background:#f0f0f0;"></div><div class="t" style="left:127px;top:559px;width:151px;height:27px;"><span><span class="c">美国</span> U20(<span class="c">中</span>)</span></div><div class="r" style="left:279px;top:559px;width:74px;height:27px;background:#f0f0f0;"></div><div class="t" style="left:279px;top:559px;width:74px;height:27px;"><span><span style="color:#f00">3-0</span>(0-0)</span></div><div class="r" style="left:354px;top:559px;width:33px;height:27px;background:#f0f0f0;"></div><div class="t" style="left:354px;top:559px;width:33px;height:27px;"><span>8-1</span></div><div class="r" style="left:388px;top:559px;width:109px;height:27px;background:#f0f0f0;"></div><div class="t" style="left:388px;top:559px;width:109px;height:27px;"><span><span style="color:#008000"><span class="c">法国</span> U20</span></span></div><div class="r" style="left:498px;top:559px;width:34px;height:27px;background:#fdf9f6;"></div><div class="t" style="left:498px;top:559px;width:34px;height:27px;"><span>0.83</span></div><div class="r" style="left:533px;top:559px;width:57px;height:27px;background:#fdf9f6;"></div><div class="t" style="left:533px;top:559px;width:57px;height:27px;"><span><span class="c">平手</span></span></div><div class="r" style="left:591px;top:559px;width:36px;height:27px;background:#fdf9f6;"></div><div class="t" style="left:591px;top:559px;width:36px;height:27px;"><span>0.99</span></div><div class="r" style="left:628px;top:559px;width:56px;height:27px;background:#eff8fc;"></div><div class="t" style="left:628px;top:559px;width:56px;height:27px;"><span>2.53</span></div><div class="r" style="left:685px;top:559px;width:57px;height:27px;background:#eff8fc;"></div><div class="t" style="left:685px;top:559px;width:57px;height:27px;"><span>3.38</span></div><div class="r" style="left:743px;top:559px;width:46px;height:27px;background:#eff8fc;"></div><div class="t" style="left:743px;top:559px;width:46px;height:27px;"><span>2.54</span></div><div class="r" style="left:790px;top:559px;width:34px;height:27px;background:#f0f0f0;"></div><div class="t" style="left:790px;top:559px;width:34px;height:27px;"><span><span style="color:#008000"><span class="c">負</span></span></span></div><div class="r" style="left:825px;top:559px;width:32px;height:27px;background:#f0f0f0;"></div><div class="t" style="left:825px;top:559px;width:32px;height:27px;"><span><span style="color:#008000"><span class="c">輸</span></span></span></div><div class="r" style="left:858px;top:559px;width:49px;height:27px;background:#f0f0f0;"></div><div class="t" style="left:858px;top:559px;width:49px;height:27px;"><span><span style="color:#f00"><span class="c">大</span></span></span></div><div class="r" style="left:0px;top:587px;width:61px;height:27px;background:#3d5200;"></div><div class="t" style="left:-1px;top:587px;width:61px;height:27px;color:#fff"><span><span class="c">世青杯</span></span></div><div class="r" style="left:62px;top:587px;width:64px;height:27px;background:#fff;"></div><div class="t" style="left:62px;top:587px;width:64px;height:27px;"><span>25-09-30</span></div><div class="r" style="left:127px;top:587px;width:151px;height:27px;background:#fff;"></div><div class="t" style="left:127px;top:587px;width:151px;height:27px;"><span><span style="color:#008000"><span class="c">法国</span> U20(<span class="c">中</span>)</span></span></div><div class="r" style="left:279px;top:587px;width:74px;height:27px;background:#fff;"></div><div class="t" style="left:279px;top:587px;width:74px;height:27px;"><span><span style="color:#f00">2-1</span>(1-1)</span></div><div class="r" style="left:354px;top:587px;width:33px;height:27px;background:#fff;"></div><div class="t" style="left:354px;top:587px;width:33px;height:27px;"><span>5-4</span></div><div class="r" style="left:388px;top:587px;width:109px;height:27px;background:#fff;"></div><div class="t" style="left:388px;top:587px;width:109px;height:27px;"><span><span class="c">南非</span> U20</span></div><div class="r" style="left:498px;top:587px;width:34px;height:27px;background:#fdf9f6;"></div><div class="t" style="left:498px;top:587px;width:34px;height:27px;"><span>0.80</span></div><div class="r" style="left:533px;top:587px;width:57px;height:27px;background:#fdf9f6;"></div><div class="t" style="left:533px;top:587px;width:57px;height:27px;"><span><span class="c">一</span>/<span class="c">球半</span></span></div><div class="r" style="left:591px;top:587px;width:36px;height:27px;background:#fdf9f6;"></div><div class="t" style="left:591px;top:587px;width:36px;height:27px;"><span>1.02</span></div><div class="r" style="left:628px;top:587px;width:56px;height:27px;background:#eff8fc;"></div><div class="t" style="left:628px;top:587px;width:56px;height:27px;"><span>1.34</span></div><div class="r" style="left:685px;top:587px;width:57px;height:27px;background:#eff8fc;"></div><div class="t" style="left:685px;top:587px;width:57px;height:27px;"><span>4.91</span></div><div class="r" style="left:743px;top:587px;width:46px;height:27px;background:#eff8fc;"></div><div class="t" style="left:743px;top:587px;width:46px;height:27px;"><span>7.56</span></div><div class="r" style="left:790px;top:587px;width:34px;height:27px;background:#fff;"></div><div class="t" style="left:790px;top:587px;width:34px;height:27px;"><span><span style="color:#f00"><span class="c">勝</span></span></span></div><div class="r" style="left:825px;top:587px;width:32px;height:27px;background:#fff;"></div><div class="t" style="left:825px;top:587px;width:32px;height:27px;"><span><span style="color:#008000"><span class="c">輸</span></span></span></div><div class="r" style="left:858px;top:587px;width:49px;height:27px;background:#fff;"></div><div class="t" style="left:858px;top:587px;width:49px;height:27px;"><span><span style="color:#f00"><span class="c">大</span></span></span></div><div class="r" style="left:0px;top:615px;width:61px;height:27px;background:#4668c4;"></div><div class="t" style="left:-1px;top:615px;width:61px;height:27px;color:#fff"><span><span class="c">国际友谊</span></span></div><div class="r" style="left:62px;top:615px;width:64px;height:27px;background:#f0f0f0;"></div><div class="t" style="left:62px;top:615px;width:64px;height:27px;"><span>25-09-07</span></div><div class="r" style="left:127px;top:615px;width:151px;height:27px;background:#f0f0f0;"></div><div class="t" style="left:127px;top:615px;width:151px;height:27px;"><span><span style="color:#008000"><span class="c">法国</span> U20</span></span></div><div class="r" style="left:279px;top:615px;width:74px;height:27px;background:#f0f0f0;"></div><div class="t" style="left:279px;top:615px;width:74px;height:27px;"><span><span style="color:#f00">1-0</span>(0-0)</span></div><div class="r" style="left:354px;top:615px;width:33px;height:27px;background:#f0f0f0;"></div><div class="t" style="left:354px;top:615px;width:33px;height:27px;"><span></span></div><div class="r" style="left:388px;top:615px;width:109px;height:27px;background:#f0f0f0;"></div><div class="t" style="left:388px;top:615px;width:109px;height:27px;"><span><span class="c">西班牙</span> U20</span></div><div class="r" style="left:498px;top:615px;width:34px;height:27px;background:#fdf9f6;"></div><div class="t" style="left:498px;top:615px;width:34px;height:27px;"><span></span></div><div class="r" style="left:533px;top:615px;width:57px;height:27px;background:#fdf9f6;"></div><div class="t" style="left:533px;top:615px;width:57px;height:27px;"><span></span></div><div class="r" style="left:591px;top:615px;width:36px;height:27px;background:#fdf9f6;"></div><div class="t" style="left:591px;top:615px;width:36px;height:27px;"><span></span></div><div class="r" style="left:628px;top:615px;width:56px;height:27px;background:#eff8fc;"></div><div class="t" style="left:628px;top:615px;width:56px;height:27px;"><span></span></div><div class="r" style="left:685px;top:615px;width:57px;height:27px;background:#eff8fc;"></div><div class="t" style="left:685px;top:615px;width:57px;height:27px;"><span></span></div><div class="r" style="left:743px;top:615px;width:46px;height:27px;background:#eff8fc;"></div><div class="t" style="left:743px;top:615px;width:46px;height:27px;"><span></span></div><div class="r" style="left:790px;top:615px;width:34px;height:27px;background:#f0f0f0;"></div><div class="t" style="left:790px;top:615px;width:34px;height:27px;"><span><span style="color:#f00"><span class="c">勝</span></span></span></div><div class="r" style="left:825px;top:615px;width:32px;height:27px;background:#f0f0f0;"></div><div class="t" style="left:825px;top:615px;width:32px;height:27px;"><span></span></div><div class="r" style="left:858px;top:615px;width:49px;height:27px;background:#f0f0f0;"></div><div class="t" style="left:858px;top:615px;width:49px;height:27px;"><span></span></div><div class="r" style="left:0px;top:643px;width:61px;height:27px;background:#ff8fc1;"></div><div class="t" style="left:-1px;top:643px;width:61px;height:27px;color:#fff"><span><span class="c">土伦杯</span></span></div><div class="r" style="left:62px;top:643px;width:64px;height:27px;background:#fff;"></div><div class="t" style="left:62px;top:643px;width:64px;height:27px;"><span>25-06-16</span></div><div class="r" style="left:127px;top:643px;width:151px;height:27px;background:#fff;"></div><div class="t" style="left:127px;top:643px;width:151px;height:27px;"><span><span style="color:#008000"><span class="c">法国</span> U20</span></span></div><div class="r" style="left:279px;top:643px;width:74px;height:27px;background:#fff;"></div><div class="t" style="left:279px;top:643px;width:74px;height:27px;"><span><span style="color:#f00">3-1</span>(2-0)</span></div><div class="r" style="left:354px;top:643px;width:33px;height:27px;background:#fff;"></div><div class="t" style="left:354px;top:643px;width:33px;height:27px;"><span>4-10</span></div><div class="r" style="left:388px;top:643px;width:109px;height:27px;background:#fff;"></div><div class="t" style="left:388px;top:643px;width:109px;height:27px;"><span><span class="c">沙特阿拉伯</span> U23</span></div><div class="r" style="left:498px;top:643px;width:34px;height:27px;background:#fdf9f6;"></div><div class="t" style="left:498px;top:643px;width:34px;height:27px;"><span>0.92</span></div><div class="r" style="left:533px;top:643px;width:57px;height:27px;background:#fdf9f6;"></div><div class="t" style="left:533px;top:643px;width:57px;height:27px;"><span><span class="c">半</span>/<span class="c">一</span></span></div><div class="r" style="left:591px;top:643px;width:36px;height:27px;background:#fdf9f6;"></div><div class="t" style="left:591px;top:643px;width:36px;height:27px;"><span>0.90</span></div><div class="r" style="left:628px;top:643px;width:56px;height:27px;background:#eff8fc;"></div><div class="t" style="left:628px;top:643px;width:56px;height:27px;"><span>1.69</span></div><div class="r" style="left:685px;top:643px;width:57px;height:27px;background:#eff8fc;"></div><div class="t" style="left:685px;top:643px;width:57px;height:27px;"><span>3.86</span></div><div class="r" style="left:743px;top:643px;width:46px;height:27px;background:#eff8fc;"></div><div class="t" style="left:743px;top:643px;width:46px;height:27px;"><span>3.98</span></div><div class="r" style="left:790px;top:643px;width:34px;height:27px;background:#fff;"></div><div class="t" style="left:790px;top:643px;width:34px;height:27px;"><span><span style="color:#f00"><span class="c">勝</span></span></span></div><div class="r" style="left:825px;top:643px;width:32px;height:27px;background:#fff;"></div><div class="t" style="left:825px;top:643px;width:32px;height:27px;"><span><span style="color:#f00"><span class="c">贏</span></span></span></div><div class="r" style="left:858px;top:643px;width:49px;height:27px;background:#fff;"></div><div class="t" style="left:858px;top:643px;width:49px;height:27px;"><span><span style="color:#f00"><span class="c">大</span></span></span></div><div class="r" style="left:0px;top:671px;width:61px;height:27px;background:#ff8fc1;"></div><div class="t" style="left:-1px;top:671px;width:61px;height:27px;color:#fff"><span><span class="c">土伦杯</span></span></div><div class="r" style="left:62px;top:671px;width:64px;height:27px;background:#f0f0f0;"></div><div class="t" style="left:62px;top:671px;width:64px;height:27px;"><span>25-06-13</span></div><div class="r" style="left:127px;top:671px;width:151px;height:27px;background:#f0f0f0;"></div><div class="t" style="left:127px;top:671px;width:151px;height:27px;"><span><span style="color:#008000"><span class="c">法国</span> U20</span></span></div><div class="r" style="left:279px;top:671px;width:74px;height:27px;background:#f0f0f0;"></div><div class="t" style="left:279px;top:671px;width:74px;height:27px;"><span><span style="color:#f00">3-1</span>(1-0)</span></div><div class="r" style="left:354px;top:671px;width:33px;height:27px;background:#f0f0f0;"></div><div class="t" style="left:354px;top:671px;width:33px;height:27px;"><span>3-12</span></div><div class="r" style="left:388px;top:671px;width:109px;height:27px;background:#f0f0f0;"></div><div class="t" style="left:388px;top:671px;width:109px;height:27px;"><span><span class="c">墨西哥</span> U20</span></div><div class="r" style="left:498px;top:671px;width:34px;height:27px;background:#fdf9f6;"></div><div class="t" style="left:498px;top:671px;width:34px;height:27px;"><span>1.02</span></div><div class="r" style="left:533px;top:671px;width:57px;height:27px;background:#fdf9f6;"></div><div class="t" style="left:533px;top:671px;width:57px;height:27px;"><span><span class="c">一球</span></span></div><div class="r" style="left:591px;top:671px;width:36px;height:27px;background:#fdf9f6;"></div><div class="t" style="left:591px;top:671px;width:36px;height:27px;"><span>0.80</span></div><div class="r" style="left:628px;top:671px;width:56px;height:27px;background:#eff8fc;"></div><div class="t" style="left:628px;top:671px;width:56px;height:27px;"><span>1.59</span></div><div class="r" style="left:685px;top:671px;width:57px;height:27px;background:#eff8fc;"></div><div class="t" style="left:685px;top:671px;width:57px;height:27px;"><span>3.97</span></div><div class="r" style="left:743px;top:671px;width:46px;height:27px;background:#eff8fc;"></div><div class="t" style="left:743px;top:671px;width:46px;height:27px;"><span>4.48</span></div><div class="r" style="left:790px;top:671px;width:34px;height:27px;background:#f0f0f0;"></div><div class="t" style="left:790px;top:671px;width:34px;height:27px;"><span><span style="color:#f00"><span class="c">勝</span></span></span></div><div class="r" style="left:825px;top:671px;width:32px;height:27px;background:#f0f0f0;"></div><div class="t" style="left:825px;top:671px;width:32px;height:27px;"><span><span style="color:#f00"><span class="c">贏</span></span></span></div><div class="r" style="left:858px;top:671px;width:49px;height:27px;background:#f0f0f0;"></div><div class="t" style="left:858px;top:671px;width:49px;height:27px;"><span><span style="color:#f00"><span class="c">大</span></span></span></div><div class="r" style="left:0px;top:699px;width:61px;height:27px;background:#ff8fc1;"></div><div class="t" style="left:-1px;top:699px;width:61px;height:27px;color:#fff"><span><span class="c">土伦杯</span></span></div><div class="r" style="left:62px;top:699px;width:64px;height:27px;background:#fff;"></div><div class="t" style="left:62px;top:699px;width:64px;height:27px;"><span>25-06-09</span></div><div class="r" style="left:127px;top:699px;width:151px;height:27px;background:#fff;"></div><div class="t" style="left:127px;top:699px;width:151px;height:27px;"><span><span class="c">巴拿马</span> U20(<span class="c">中</span>)</span></div><div class="r" style="left:279px;top:699px;width:74px;height:27px;background:#fff;"></div><div class="t" style="left:279px;top:699px;width:74px;height:27px;"><span><span style="color:#f00">1-2</span>(1-2)</span></div><div class="r" style="left:354px;top:699px;width:33px;height:27px;background:#fff;"></div><div class="t" style="left:354px;top:699px;width:33px;height:27px;"><span>5-3</span></div><div class="r" style="left:388px;top:699px;width:109px;height:27px;background:#fff;"></div><div class="t" style="left:388px;top:699px;width:109px;height:27px;"><span><span style="color:#008000"><span class="c">法国</span> U20</span></span></div><div class="r" style="left:498px;top:699px;width:34px;height:27px;background:#fdf9f6;"></div><div class="t" style="left:498px;top:699px;width:34px;height:27px;"><span>0.96</span></div><div class="r" style="left:533px;top:699px;width:57px;height:27px;background:#fdf9f6;"></div><div class="t" style="left:533px;top:699px;width:57px;height:27px;"><span><span class="st" style="color:#f00">*</span><span class="c">一球</span></span></div><div class="r" style="left:591px;top:699px;width:36px;height:27px;background:#fdf9f6;"></div><div class="t" style="left:591px;top:699px;width:36px;height:27px;"><span>0.93</span></div><div class="r" style="left:628px;top:699px;width:56px;height:27px;background:#eff8fc;"></div><div class="t" style="left:628px;top:699px;width:56px;height:27px;"><span>5.91</span></div><div class="r" style="left:685px;top:699px;width:57px;height:27px;background:#eff8fc;"></div><div class="t" style="left:685px;top:699px;width:57px;height:27px;"><span>4.38</span></div><div class="r" style="left:743px;top:699px;width:46px;height:27px;background:#eff8fc;"></div><div class="t" style="left:743px;top:699px;width:46px;height:27px;"><span>1.45</span></div><div class="r" style="left:790px;top:699px;width:34px;height:27px;background:#fff;"></div><div class="t" style="left:790px;top:699px;width:34px;height:27px;"><span><span style="color:#f00"><span class="c">勝</span></span></span></div><div class="r" style="left:825px;top:699px;width:32px;height:27px;background:#fff;"></div><div class="t" style="left:825px;top:699px;width:32px;height:27px;"><span><span style="color:#00f"><span class="c">走</span></span></span></div><div class="r" style="left:858px;top:699px;width:49px;height:27px;background:#fff;"></div><div class="t" style="left:858px;top:699px;width:49px;height:27px;"><span><span style="color:#f00"><span class="c">大</span></span></span></div><div class="r" style="left:0px;top:727px;width:61px;height:27px;background:#ff8fc1;"></div><div class="t" style="left:-1px;top:727px;width:61px;height:27px;color:#fff"><span><span class="c">土伦杯</span></span></div><div class="r" style="left:62px;top:727px;width:64px;height:27px;background:#f0f0f0;"></div><div class="t" style="left:62px;top:727px;width:64px;height:27px;"><span>25-06-06</span></div><div class="r" style="left:127px;top:727px;width:151px;height:27px;background:#f0f0f0;"></div><div class="t" style="left:127px;top:727px;width:151px;height:27px;"><span><span style="color:#008000"><span class="c">法国</span> U20</span></span></div><div class="r" style="left:279px;top:727px;width:74px;height:27px;background:#f0f0f0;"></div><div class="t" style="left:279px;top:727px;width:74px;height:27px;"><span><span style="color:#f00">1-1</span>(1-1)</span></div><div class="r" style="left:354px;top:727px;width:33px;height:27px;background:#f0f0f0;"></div><div class="t" style="left:354px;top:727px;width:33px;height:27px;"><span>4-7</span></div><div class="r" style="left:388px;top:727px;width:109px;height:27px;background:#f0f0f0;"></div><div class="t" style="left:388px;top:727px;width:109px;height:27px;"><span><span class="c">马里</span> U20</span></div><div class="r" style="left:498px;top:727px;width:34px;height:27px;background:#fdf9f6;"></div><div class="t" style="left:498px;top:727px;width:34px;height:27px;"><span>0.90</span></div><div class="r" style="left:533px;top:727px;width:57px;height:27px;background:#fdf9f6;"></div><div class="t" style="left:533px;top:727px;width:57px;height:27px;"><span><span class="c">一</span>/<span class="c">球半</span></span></div><div class="r" style="left:591px;top:727px;width:36px;height:27px;background:#fdf9f6;"></div><div class="t" style="left:591px;top:727px;width:36px;height:27px;"><span>0.92</span></div><div class="r" style="left:628px;top:727px;width:56px;height:27px;background:#eff8fc;"></div><div class="t" style="left:628px;top:727px;width:56px;height:27px;"><span>1.41</span></div><div class="r" style="left:685px;top:727px;width:57px;height:27px;background:#eff8fc;"></div><div class="t" style="left:685px;top:727px;width:57px;height:27px;"><span>4.15</span></div><div class="r" style="left:743px;top:727px;width:46px;height:27px;background:#eff8fc;"></div><div class="t" style="left:743px;top:727px;width:46px;height:27px;"><span>6.35</span></div><div class="r" style="left:790px;top:727px;width:34px;height:27px;background:#f0f0f0;"></div><div class="t" style="left:790px;top:727px;width:34px;height:27px;"><span><span style="color:#00f"><span class="c">平</span></span></span></div><div class="r" style="left:825px;top:727px;width:32px;height:27px;background:#f0f0f0;"></div><div class="t" style="left:825px;top:727px;width:32px;height:27px;"><span><span style="color:#008000"><span class="c">輸</span></span></span></div><div class="r" style="left:858px;top:727px;width:49px;height:27px;background:#f0f0f0;"></div><div class="t" style="left:858px;top:727px;width:49px;height:27px;"><span><span style="color:#008000"><span class="c">小</span></span></span></div><div class="sel" style="left:511px;top:435px;width:59px;height:20px;"><span class="lb">Crow*</span><svg class="ar" width="7" height="6" viewBox="0 0 7 6"><path d="M0 0 H7 L3.5 6 Z" fill="#111"/></svg></div><div class="sel" style="left:578px;top:435px;width:36px;height:20px;"><span class="lb">终</span><svg class="ar" width="7" height="6" viewBox="0 0 7 6"><path d="M0 0 H7 L3.5 6 Z" fill="#111"/></svg></div><div class="sel" style="left:644px;top:435px;width:84px;height:20px;"><span class="lb">胜平负均值</span><svg class="ar" width="7" height="6" viewBox="0 0 7 6"><path d="M0 0 H7 L3.5 6 Z" fill="#111"/></svg></div><div class="sel" style="left:736px;top:435px;width:36px;height:20px;"><span class="lb">终</span><svg class="ar" width="7" height="6" viewBox="0 0 7 6"><path d="M0 0 H7 L3.5 6 Z" fill="#111"/></svg></div><div class="sel" style="left:824px;top:435px;width:48px;height:20px;"><span class="lb">全场</span><svg class="ar" width="7" height="6" viewBox="0 0 7 6"><path d="M0 0 H7 L3.5 6 Z" fill="#111"/></svg></div><div class="r" style="left:0px;top:755px;width:908px;height:1px;background:#f7f7f7;"></div></body></html>
